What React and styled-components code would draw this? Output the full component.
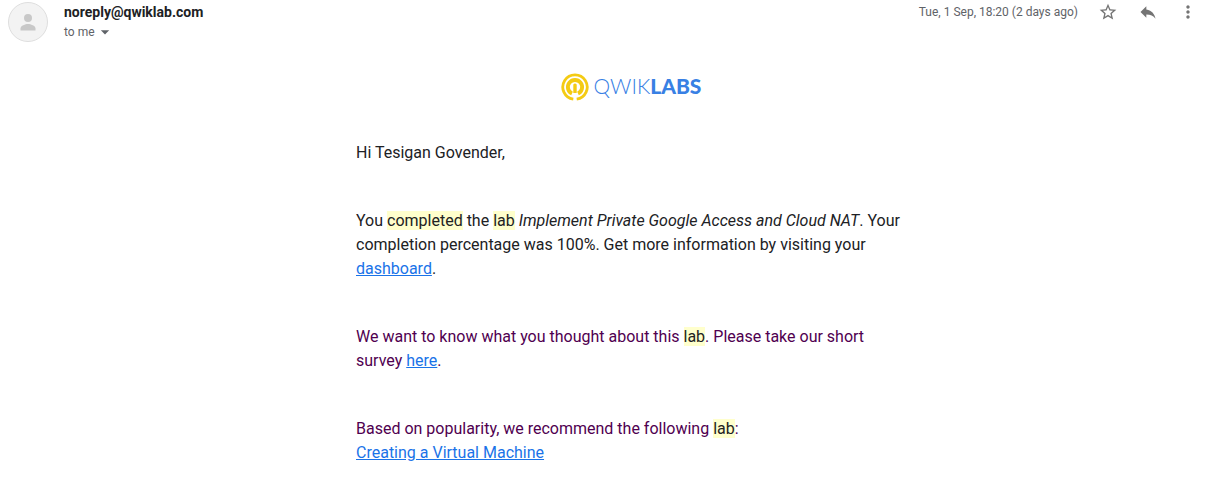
import React from "react";
import styled, { createGlobalStyle } from "styled-components";
import { MdStarBorder, MdReply, MdMoreVert, MdArrowDropDown } from "react-icons/md";

const GlobalStyle = createGlobalStyle`
  * { box-sizing: border-box; }
  body {
    margin: 0;
    background: #fff;
    color: #202124;
    font-family: Roboto, "Liberation Sans", sans-serif;
  }
`;

const Message = styled.article`
  padding: 0 18px 36px 8px;
`;

const Header = styled.header`
  display: flex;
  align-items: flex-start;
  gap: 16px;
`;

const Avatar = styled.svg`
  flex: none;
  width: 40px;
  height: 40px;
  margin-top: 2px;
`;

const Sender = styled.div`
  flex: 1;
  min-width: 0;
  padding-top: 2px;
`;

const SenderName = styled.h3`
  margin: 0;
  font-size: 14px;
  line-height: 20px;
  font-weight: 700;
`;

const Recipient = styled.button`
  display: flex;
  align-items: center;
  padding: 0;
  border: 0;
  background: none;
  color: #5f6368;
  font: 12px/20px Roboto, "Liberation Sans", sans-serif;
  cursor: pointer;
`;

const Meta = styled.div`
  display: flex;
  align-items: center;
  gap: 20px;
  padding-top: 2px;
`;

const SentAt = styled.time`
  color: #5f6368;
  font-size: 12px;
  line-height: 20px;
`;

const IconButton = styled.button`
  display: flex;
  padding: 0;
  border: 0;
  background: none;
  color: #747474;
  cursor: pointer;
`;

const BodyArea = styled.div`
  padding-left: 56px;
`;

const Column = styled.div`
  max-width: 550px;
  margin: 0 auto;
`;

const Brand = styled.div`
  display: flex;
  align-items: center;
  justify-content: center;
  gap: 5px;
  height: 28px;
  margin: 31px 0 40px;
`;

const Wordmark = styled.span`
  padding-bottom: 2px;
  color: #3880e4;
  font-family: Lato, sans-serif;
  font-size: 21px;
  line-height: 26px;
  font-weight: 300;

  strong { font-weight: 900; }
`;

const Paragraph = styled.p`
  margin: 0 0 44px;
  color: ${(p) => (p.$quoted ? "#500050" : "#202124")};
  font-size: 16px;
  line-height: 24px;

  &:last-child { margin-bottom: 0; }
`;

const Match = styled.mark`
  background: #ffffcc;
  color: #222;
`;

const Link = styled.a`
  color: #1a73e8;
`;

function BrandLogo() {
  return (
    <svg width="28" height="28" viewBox="0 0 28 28" aria-hidden="true">
      <g fill="none" stroke="#f4cb13">
        <path d="M12.300 26.100A12.200 12.200 0 1 1 15.700 26.100" strokeWidth="2.800" />
        <path d="M11 20.500A7.100 7.100 0 1 1 17 20.500" strokeWidth="3.900" />
      </g>
      <path d="M12.300 11.500q1.700-1.800 3.400 0V20h-3.400z" fill="#f4cb13" />
    </svg>
  );
}

export default function App() {
  return (
    <>
      <GlobalStyle />
      <Message>
        <Header>
          <Avatar viewBox="0 0 40 40" aria-hidden="true">
            <circle cx="20" cy="20" r="19.5" fill="#f3f3f3" stroke="#dedede" />
            <circle cx="20" cy="16" r="4" fill="#c8c8c8" />
            <path d="M12.500 28.500v-2c0-3 5-4.500 7.500-4.500s7.500 1.500 7.500 4.500v2z" fill="#c8c8c8" />
          </Avatar>
          <Sender>
            <SenderName>noreply@qwiklab.com</SenderName>
            <Recipient type="button">
              to me
              <MdArrowDropDown size={20} />
            </Recipient>
          </Sender>
          <Meta>
            <SentAt>Tue, 1 Sep, 18:20 (2 days ago)</SentAt>
            <IconButton type="button" aria-label="Star"><MdStarBorder size={20} /></IconButton>
            <IconButton type="button" aria-label="Reply"><MdReply size={20} /></IconButton>
            <IconButton type="button" aria-label="More"><MdMoreVert size={20} /></IconButton>
          </Meta>
        </Header>
        <BodyArea>
          <Column>
            <Brand role="img" aria-label="Qwiklabs">
              <BrandLogo />
              <Wordmark>QWIK<strong>LABS</strong></Wordmark>
            </Brand>
            <Paragraph>Hi Tesigan Govender,</Paragraph>
            <Paragraph>
              You <Match>completed</Match> the <Match>lab</Match>{" "}
              <em>Implement Private Google Access and Cloud NAT</em>. Your completion
              percentage was 100%. Get more information by visiting your{" "}
              <Link href="#dashboard">dashboard</Link>.
            </Paragraph>
            <Paragraph $quoted>
              We want to know what you thought about this <Match>lab</Match>. Please take our
              short survey <Link href="#survey">here</Link>.
            </Paragraph>
            <Paragraph $quoted>
              Based on popularity, we recommend the following <Match>lab</Match>:
              <br />
              <Link href="#lab">Creating a Virtual Machine</Link>
            </Paragraph>
          </Column>
        </BodyArea>
      </Message>
    </>
  );
}
